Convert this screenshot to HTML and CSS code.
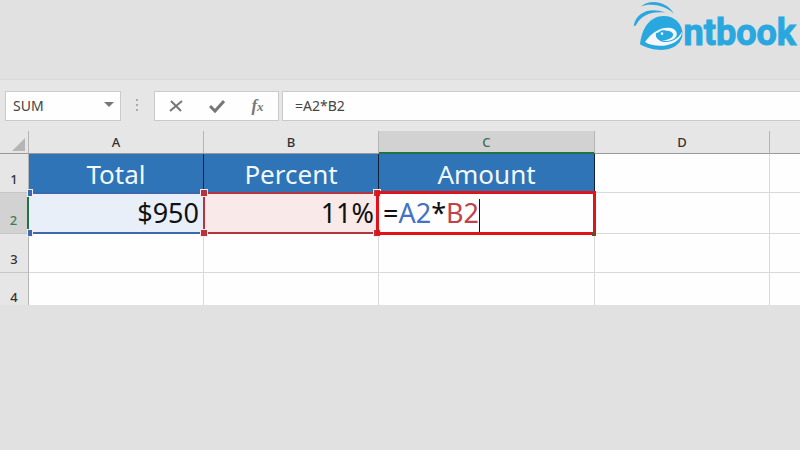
FILE: index.html
```html
<!DOCTYPE html>
<html lang="en">
<head>
    <meta charset="UTF-8">
    <meta name="viewport" content="width=device-width, initial-scale=1.0">
    <title>Percent of total - Antbook</title>
    <link rel="stylesheet" href="styles.css">
</head>
<body>
    <header>
        <a href="#" class="logo" aria-label="Antbook">
            <svg class="logo-eye" viewBox="0 0 159 156" aria-hidden="true">
                <path d="M29 20C52 -1 102 -1 129 41C101 16 60 8 29 20Z"/>
                <path d="M8 79C14 38 56 20 103 38C64 33 30 44 15 76Z"/>
                <path d="M27 133C32 86 56 48 98 48C128 48 149 66 154 94C158 128 128 150 91 150C66 150 44 143 27 133Z"/>
                <path class="logo-white" d="M42 126C58 101 84 82 113 83C134 84 142 99 135 110C126 123 105 125 92 121C112 122 130 110 126 101C119 91 102 91 96 92L75 100C71 115 86 125 100 126C124 128 144 114 154 94C152 118 128 134 99 137C76 139 56 135 42 126Z"/>
                <circle cx="96" cy="106" r="15"/>
                <circle class="logo-white" cx="93" cy="101" r="4"/>
            </svg>
            <span class="logo-text">ntbook</span>
        </a>
    </header>

    <main>
        <form class="formula-bar">
            <div class="name-box">
                <select aria-label="Name box">
                    <option>SUM</option>
                </select>
                <svg class="arrow" viewBox="0 0 10 6" aria-hidden="true"><path d="M0 0h10L5 5z"/></svg>
            </div>
            <svg class="grip" viewBox="0 0 3 13" aria-hidden="true">
                <path d="M0 0h2v2H0zM0 5h2v2H0zM0 10h2v2H0z"/>
            </svg>
            <div class="buttons">
                <button type="button" aria-label="Cancel">
                    <svg viewBox="0 0 16 16"><path d="M3 3L13 13M14 3L2 13"/></svg>
                </button>
                <button type="button" aria-label="Enter">
                    <svg viewBox="0 0 16 16"><path class="thick" d="M1 8L6 13L15 3"/></svg>
                </button>
                <button type="button" class="fx" aria-label="Insert function">f<small>x</small></button>
            </div>
            <input type="text" class="formula" aria-label="Formula" value="=A2*B2">
        </form>

        <div class="sheet">
            <table>
                <colgroup>
                    <col class="col-num">
                    <col class="col-normal">
                    <col class="col-normal">
                    <col class="col-wide">
                    <col class="col-normal">
                    <col>
                </colgroup>
                <thead>
                    <tr>
                        <th><svg class="corner" viewBox="0 0 13 13" aria-hidden="true"><path d="M13 0v13H0z"/></svg></th>
                        <th>A</th>
                        <th>B</th>
                        <th class="current">C</th>
                        <th>D</th>
                        <th></th>
                    </tr>
                </thead>
                <tbody>
                    <tr>
                        <th>1</th>
                        <td class="title">Total</td>
                        <td class="title">Percent</td>
                        <td class="title">Amount</td>
                        <td></td>
                        <td></td>
                    </tr>
                    <tr>
                        <th class="current">2</th>
                        <td class="number ref-blue">$950<span class="range blue"><i></i><i></i><i></i><i></i></span></td>
                        <td class="number ref-red">11%<span class="range red"><i></i><i></i><i></i><i></i></span></td>
                        <td class="editing">=<span class="text-blue">A2</span>*<span class="text-red">B2</span><span class="caret"></span><span class="outline"></span></td>
                        <td></td>
                        <td></td>
                    </tr>
                    <tr>
                        <th>3</th>
                        <td></td>
                        <td></td>
                        <td></td>
                        <td></td>
                        <td></td>
                    </tr>
                    <tr class="last">
                        <th>4</th>
                        <td></td>
                        <td></td>
                        <td></td>
                        <td></td>
                        <td></td>
                    </tr>
                </tbody>
            </table>
        </div>
    </main>
</body>
</html>
```

FILE: styles.css
```css
* {
    box-sizing: border-box;
}

body {
    font-family: "Noto Sans", "Open Sans", sans-serif;
    margin: 0;
    background-color: #e1e1e1;
    color: #444;
}

header {
    display: flex;
    justify-content: flex-end;
    height: 79px;
    padding: 0 4px;
}

.logo {
    display: flex;
    align-items: flex-start;
    color: #29a8e0;
    text-decoration: none;
}

.logo-eye {
    width: 53px;
    height: 52px;
    fill: #29a8e0;
}

.logo-white {
    fill: #f4f8fa;
}

.logo-text {
    font-family: Roboto, sans-serif;
    font-size: 36px;
    font-weight: 700;
    line-height: 40px;
    padding-top: 13px;
    -webkit-text-stroke: 1px #29a8e0;
}

main {
    background-color: #e6e6e6;
    border-top: 1px solid #dadada;
}

.formula-bar {
    display: flex;
    align-items: center;
    height: 51px;
    padding-left: 5px;
}

.name-box, .buttons, .formula {
    height: 30px;
    background-color: #fefefe;
    border: 1px solid #cacaca;
}

.name-box {
    position: relative;
    width: 116px;
}

.name-box select {
    width: 100%;
    height: 100%;
    padding: 0 7px;
    border: none;
    background: none;
    appearance: none;
    color: #444;
    font: 14px "Noto Sans", sans-serif;
}

.arrow {
    position: absolute;
    right: 6px;
    top: 10px;
    width: 10px;
    height: 6px;
    fill: #777;
    pointer-events: none;
}

.grip {
    width: 3px;
    height: 13px;
    margin: 0 15px;
    fill: #aaa;
}

.buttons {
    display: flex;
    width: 125px;
    margin-right: 3px;
}

.buttons button {
    display: flex;
    flex: 1;
    align-items: center;
    justify-content: center;
    padding: 0;
    border: none;
    background: none;
    color: #777;
    cursor: pointer;
}

.buttons svg {
    width: 16px;
    height: 16px;
    fill: none;
    stroke: #777;
    stroke-width: 2;
}

.buttons .thick {
    stroke-width: 3;
}

.buttons .fx {
    font: italic bold 17px "Liberation Serif", serif;
}

.fx small {
    font-size: 13px;
    padding-top: 3px;
}

.formula {
    flex: 1;
    min-width: 0;
    padding: 0 12px;
    border-right: none;
    color: #444;
    font: 14px "Noto Sans", sans-serif;
}

.sheet {
    overflow: hidden;
}

table {
    width: 100%;
    table-layout: fixed;
    border-collapse: separate;
    border-spacing: 0;
    background-color: #fefefe;
}

.col-num {
    width: 29px;
}

.col-normal {
    width: 175px;
}

.col-wide {
    width: 216px;
}

th {
    padding: 0;
    background-color: #e6e6e6;
    border-right: 1px solid #b5b5b5;
    border-bottom: 1px solid #c6c6c6;
    color: #333;
    font-size: 13px;
    font-weight: 500;
    line-height: 20px;
}

thead th {
    height: 23px;
    border-bottom-color: #999;
}

thead th.current {
    background-color: #d2d2d2;
    border-bottom: 2px solid #217346;
    color: #3f6f55;
}

.corner {
    display: block;
    width: 13px;
    height: 13px;
    margin: 5px 3px 0 auto;
    fill: #b5b5b5;
}

tbody th {
    vertical-align: bottom;
    padding-bottom: 3px;
}

tbody th.current {
    background-color: #d2d2d2;
    border-right: 2px solid #217346;
    color: #3f7f5a;
}

td {
    position: relative;
    height: 39px;
    padding: 0 4px;
    border-right: 1px solid #d9d9d9;
    border-bottom: 1px solid #d9d9d9;
    color: #111;
    font-size: 27px;
    line-height: 39px;
    white-space: nowrap;
}

td:last-child, th:last-child {
    border-right: none;
}

.last td {
    height: 32px;
    border-bottom: none;
}

.last th {
    border-bottom: none;
    padding-bottom: 0;
    line-height: 15px;
}

td.title {
    background-color: #2e74b6;
    border-right-color: #0d2238;
    border-bottom-color: #2e74b6;
    color: #f2f8fd;
    font-size: 26px;
    line-height: 36px;
    padding-top: 2px;
    text-align: center;
}

.number {
    text-align: right;
}

.ref-blue {
    background-color: #e9eff9;
}

.ref-red {
    background-color: #f9e9e9;
}

/* coloured frames over the referenced cells */
.range {
    position: absolute;
    inset: -1px 0 -1px -1px;
}

.blue {
    border: 2px solid #3a69ae;
    border-left: none;
    border-right: none;
}

.red {
    z-index: 1;
    border: 2px solid #b5353f;
}

.range i {
    position: absolute;
    width: 6px;
    height: 6px;
    background-color: #b5353f;
    outline: 1px solid #f9e9e9;
}

.blue i {
    width: 4px;
    background-color: #3a69ae;
}

.range i:nth-child(odd) {
    left: -4px;
}

.blue i:nth-child(odd) {
    left: 0;
}

.range i:nth-child(even) {
    right: -4px;
}

.range i:nth-child(-n+2) {
    top: -4px;
}

.range i:nth-child(n+3) {
    bottom: -4px;
}

.text-blue {
    color: #4472c4;
}

.text-red {
    color: #c0434a;
}

.caret {
    display: inline-block;
    width: 1px;
    height: 34px;
    background-color: #111;
    vertical-align: middle;
}

td.editing {
    line-height: 34px;
    padding-top: 3px;
}

.outline {
    position: absolute;
    z-index: 2;
    inset: -2px -2px -2px -3px;
    border: 3px solid #df1418;
}

.outline::after {
    content: "";
    position: absolute;
    right: -3px;
    bottom: -4px;
    width: 4px;
    height: 4px;
    background-color: #6b4a24;
}
```
